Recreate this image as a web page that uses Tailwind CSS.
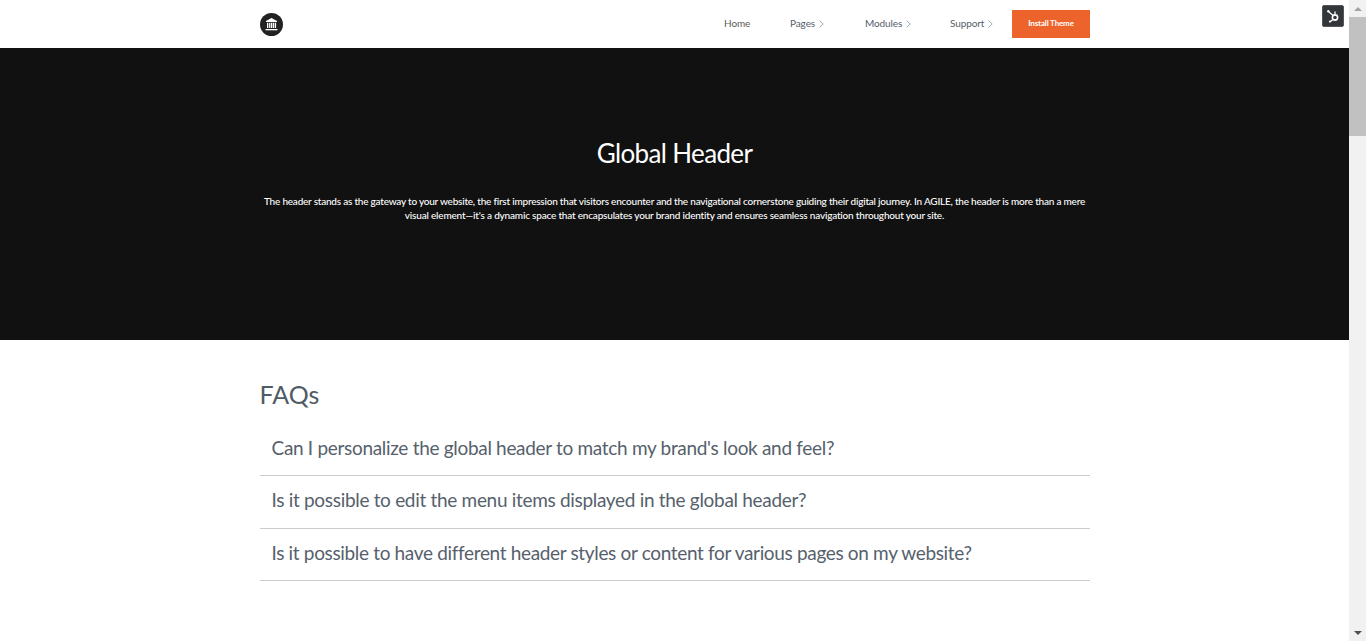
<!DOCTYPE html>
<html lang="en"><head><meta charset="utf-8"><title>Global Header</title>
<script src="https://cdn.jsdelivr.net/npm/@tailwindcss/browser@4"></script></head>
<body class="bg-white">
<div class="relative flex h-[641px] w-[1366px] overflow-hidden font-['Lato','Noto_Sans',sans-serif]">
  <main class="w-[1349px] shrink-0">
    <header class="h-12 bg-white">
      <div class="mx-auto flex h-12 w-[830px] items-center justify-between">
        <div class="flex h-[23px] w-[23px] items-center justify-center rounded-full bg-[#222222]">
          <svg width="15" height="15" viewBox="0 0 15 15" fill="#fff"><path d="M7.5 1 13 4V5H2V4Z"/><rect x="3" y="5.8" width="1.3" height="5.2"/><rect x="5.1" y="5.8" width="1.3" height="5.2"/><rect x="7" y="5.8" width="1.3" height="5.2"/><rect x="8.9" y="5.8" width="1.3" height="5.2"/><rect x="10.8" y="5.8" width="1.3" height="5.2"/><rect x="1.5" y="12" width="12" height="1.3"/></svg>
        </div>
        <nav class="flex items-center text-[10px] tracking-[-0.1px] text-[#55606a]">
          <a class="absolute left-[724px] top-[16px] text-[#5d5a58]">Home</a>
          <a class="absolute left-[790px] top-[16px] flex items-center gap-[4px]">Pages <svg width="5" height="8" viewBox="0 0 5 8" fill="none" stroke="#a5a9ad" stroke-width="1"><path d="M.7 .7 4.2 4 .7 7.3"/></svg></a>
          <a class="absolute left-[865px] top-[16px] flex items-center gap-[4px]">Modules <svg width="5" height="8" viewBox="0 0 5 8" fill="none" stroke="#a5a9ad" stroke-width="1"><path d="M.7 .7 4.2 4 .7 7.3"/></svg></a>
          <a class="absolute left-[950px] top-[16px] flex items-center gap-[4px]">Support <svg width="5" height="8" viewBox="0 0 5 8" fill="none" stroke="#a5a9ad" stroke-width="1"><path d="M.7 .7 4.2 4 .7 7.3"/></svg></a>
          <a class="absolute left-[1012px] top-[10px] flex h-[28px] w-[78px] items-center justify-center bg-[#ec642b] pb-[2px] text-[8px] font-bold tracking-[-0.15px] text-white">Install Theme</a>
        </nav>
      </div>
    </header>
    <section class="h-[292px] bg-[#111111] pt-[87px] text-center text-white">
      <h1 class="text-[26px] leading-9 font-normal tracking-[-0.65px]">Global Header</h1>
      <p class="mx-auto mt-[23px] w-[830px] whitespace-nowrap text-[10px] leading-[14px] font-medium tracking-[-0.19px]"><span class="tracking-[-0.215px]">The header stands as the gateway to your website, the first impression that visitors encounter and the navigational cornerstone guiding their digital journey. In AGILE, the header is more than a mere</span><br>visual element—it's a dynamic space that encapsulates your brand identity and ensures seamless navigation throughout your site.</p>
    </section>
    <section class="mx-auto w-[830px] pt-[37px] text-[#4f5b66]">
      <h2 class="text-[25px] leading-[34px] font-normal">FAQs</h2>
      <div class="mt-[4px] text-[19px] leading-[26px] tracking-[-0.31px] text-[#56616c]">
        <div class="h-[61px] border-b border-[#cccccc] px-3 pt-[20px]">Can I personalize the global header to match my brand's look and feel?</div>
        <div class="h-[53px] border-b border-[#cccccc] px-3 pt-[11px]">Is it possible to edit the menu items displayed in the global header?</div>
        <div class="h-[52px] border-b border-[#cccccc] px-3 pt-[11px] tracking-[-0.34px]">Is it possible to have different header styles or content for various pages on my website?</div>
      </div>
    </section>
  </main>
  <div class="flex w-[17px] shrink-0 flex-col items-center bg-[#f1f1f1]">
    <div class="flex h-[17px] w-full items-center justify-center"><div class="h-0 w-0 border-x-[4px] border-b-[4px] border-x-transparent border-b-[#a3a3a3]"></div></div>
    <div class="h-[119px] w-full bg-[#c1c1c1]"></div>
    <div class="flex-1"></div>
    <div class="flex h-[17px] w-full items-center justify-center"><div class="h-0 w-0 border-x-[4px] border-t-[4px] border-x-transparent border-t-[#505050]"></div></div>
  </div>
  <div class="absolute left-[1322px] top-[5px] flex h-[22px] w-[22px] items-center justify-center rounded-[2px] border border-[#555555] bg-[#33363a]">
    <svg width="16" height="16" viewBox="0 0 16 16" fill="none" stroke="#fff"><circle cx="10" cy="9.5" r="2.6" stroke-width="1.6"/><path d="M8 7.5 3.8 3.8M10 6.5V3.5M8 11.5 5.5 13.5" stroke-width="1.3"/><circle cx="3.3" cy="3.3" r="1.2" fill="#fff" stroke="none"/><circle cx="5" cy="13.6" r="1.1" fill="#fff" stroke="none"/></svg>
  </div>
</div>
</body></html>
